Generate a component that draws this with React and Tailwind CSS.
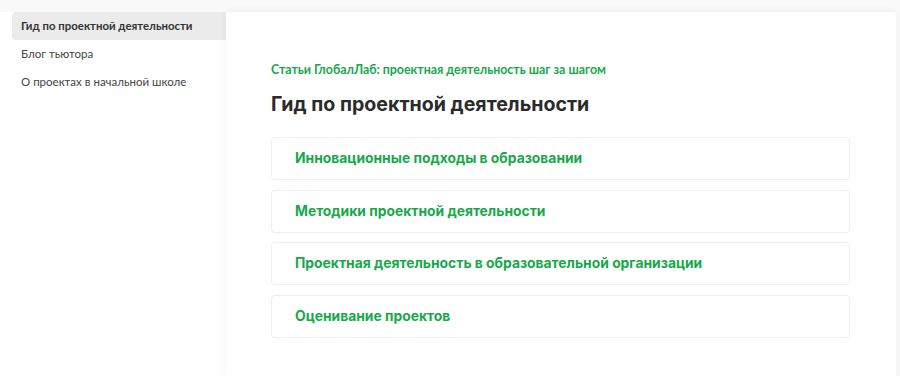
export default function App() {
  const cards = [
    "Инновационные подходы в образовании",
    "Методики проектной деятельности",
    "Проектная деятельность в образовательной организации",
    "Оценивание проектов",
  ];
  return (
    <div className="w-[900px] h-[376px] overflow-hidden bg-white flex flex-col" style={{ fontFamily: "Lato, 'Noto Sans', sans-serif" }}>
      <div className="h-[12px] bg-[#f9f9f9] shrink-0" />
      <div className="flex flex-1 min-h-0">
        <div className="w-[226px] shrink-0 pl-[12px] flex flex-col">
          <div className="h-[28px] bg-[#ebebeb] rounded-l-[4px] pl-[9px] flex items-center text-[11.4px] font-bold text-[#333]">
            Гид по проектной деятельности
          </div>
          <div className="h-[28px] pl-[9px] flex items-center text-[11.5px] text-[#444]">Блог тьютора</div>
          <div className="h-[28px] pl-[9px] flex items-center text-[11.5px] text-[#444]">О проектах в начальной школе</div>
        </div>
        <div className="w-[670px] shrink-0 bg-white rounded-tr-[6px] shadow-[0_0_8px_rgba(0,0,0,0.06)] pl-[45px] pr-[46px] pt-[46px]">
          <div className="text-[12.4px] font-bold text-[#17a84a] leading-[24px]">
            Статьи ГлобалЛаб: проектная деятельность шаг за шагом
          </div>
          <h1 className="mt-[10px] text-[19.6px] font-bold text-[#2b2b2b] leading-[24px]" style={{ fontFamily: "Inter, sans-serif" }}>
            Гид по проектной деятельности
          </h1>
          <div className="mt-[21px] flex flex-col gap-[9.5px]">
            {cards.map((c) => (
              <div key={c} className="h-[43px] border border-[#efefef] rounded-[4px] pl-[23px] flex items-center text-[13.85px] font-bold text-[#17a84a]" style={{ fontFamily: "Inter, sans-serif" }}>
                {c}
              </div>
            ))}
          </div>
        </div>
        <div className="flex-1 bg-[#f7f7f7]" />
      </div>
    </div>
  );
}
